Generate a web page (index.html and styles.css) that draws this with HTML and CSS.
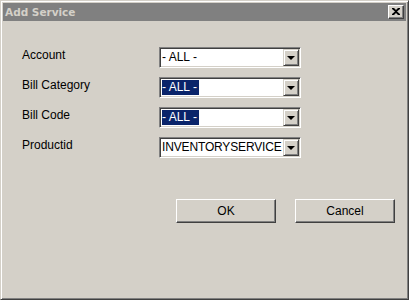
FILE: index.html
```html
<!DOCTYPE html>
<html>
<head>
<meta charset="utf-8">
<link rel="stylesheet" href="styles.css">
</head>
<body>
<div class="window">
  <div class="titlebar">
    <span class="title">Add Service</span>
    <span class="close"><svg width="8" height="7" viewBox="0 0 8 7"><path d="M0 0h2l2 2 2-2h2v1L5 3.5 8 6v1H6L4 5 2 7H0V6l3-2.5L0 1z" fill="#000"/></svg></span>
  </div>
  <div class="form">
    <div class="row">
      <span class="label">Account</span>
      <div class="select"><span class="value">- ALL -</span><span class="drop"><i class="arrow"></i></span></div>
    </div>
    <div class="row">
      <span class="label">Bill Category</span>
      <div class="select"><span class="value sel">- ALL -</span><span class="drop"><i class="arrow"></i></span></div>
    </div>
    <div class="row">
      <span class="label">Bill Code</span>
      <div class="select"><span class="value sel">- ALL -</span><span class="drop"><i class="arrow"></i></span></div>
    </div>
    <div class="row">
      <span class="label">Productid</span>
      <div class="select"><span class="value tight">INVENTORYSERVICE</span><span class="drop"><i class="arrow"></i></span></div>
    </div>
  </div>
  <div class="buttons">
    <button class="btn">OK</button>
    <button class="btn">Cancel</button>
  </div>
</div>
</body>
</html>
```

FILE: styles.css
```css
html, body {
  margin: 0;
  padding: 0;
  background: #d4d0c8;
}
.window {
  box-sizing: border-box;
  width: 409px;
  height: 300px;
  background: #d4d0c8;
  border-top: 1px solid #d4d0c8;
  border-left: 1px solid #d4d0c8;
  border-right: 1px solid #404040;
  border-bottom: 1px solid #404040;
  box-shadow: inset 1px 1px 0 #fff, inset -1px -1px 0 #808080;
  padding: 2px;
  font-family: "Liberation Sans", Arial, sans-serif;
  font-size: 12px;
  color: #000;
}
.titlebar {
  height: 18px;
  background: #808080;
  display: flex;
  align-items: center;
  justify-content: space-between;
  padding-left: 2px;
  padding-right: 2px;
}
.title {
  font-family: "DejaVu Sans", Tahoma, sans-serif;
  font-weight: bold;
  font-size: 10.5px;
  color: #d4d0c8;
}
.close {
  box-sizing: border-box;
  width: 16px;
  height: 14px;
  background: #d4d0c8;
  border-top: 1px solid #fff;
  border-left: 1px solid #fff;
  border-right: 1px solid #404040;
  border-bottom: 1px solid #404040;
  box-shadow: inset -1px -1px 0 #808080;
  display: flex;
  align-items: center;
  justify-content: center;
  padding-right: 1px;
  padding-bottom: 1px;
}
.form {
  display: flex;
  flex-direction: column;
  gap: 9px;
  margin-top: 26px;
  padding-left: 19px;
}
.row {
  display: flex;
  align-items: flex-start;
}
.label {
  width: 137px;
  line-height: 15px;
  padding-top: 1px;
}
.select {
  box-sizing: border-box;
  width: 142px;
  height: 21px;
  background: #fff;
  border-top: 1px solid #808080;
  border-left: 1px solid #808080;
  border-right: 1px solid #fff;
  border-bottom: 1px solid #fff;
  box-shadow: inset 1px 1px 0 #404040, inset -1px -1px 0 #d4d0c8;
  display: flex;
  align-items: center;
  padding: 1px 1px 1px 2px;
  overflow: hidden;
}
.value {
  flex: 1;
  min-width: 0;
  white-space: nowrap;
  overflow: hidden;
  line-height: 15px;
}
.value.tight {
  letter-spacing: -0.15px;
}
.value.sel {
  flex: 0 0 auto;
  background: #0a246a;
  color: #fff;
  padding-right: 2px;
  margin-right: auto;
}
.drop {
  box-sizing: border-box;
  flex: 0 0 16px;
  width: 16px;
  height: 17px;
  background: #d4d0c8;
  border-top: 1px solid #d4d0c8;
  border-left: 1px solid #d4d0c8;
  border-right: 1px solid #404040;
  border-bottom: 1px solid #404040;
  box-shadow: inset 1px 1px 0 #fff, inset -1px -1px 0 #808080;
  display: flex;
  align-items: center;
  justify-content: center;
}
.arrow {
  width: 0;
  height: 0;
  border-left: 4px solid transparent;
  border-right: 4px solid transparent;
  border-top: 4px solid #000;
}
.buttons {
  display: flex;
  gap: 19px;
  margin-top: 41px;
  padding-left: 173px;
}
.btn {
  box-sizing: border-box;
  width: 100px;
  height: 24px;
  margin: 0;
  padding: 0;
  background: #d4d0c8;
  border-top: 1px solid #fff;
  border-left: 1px solid #fff;
  border-right: 1px solid #404040;
  border-bottom: 1px solid #404040;
  box-shadow: inset -1px -1px 0 #808080;
  font-family: "Liberation Sans", Arial, sans-serif;
  font-size: 12px;
  color: #000;
}
```
